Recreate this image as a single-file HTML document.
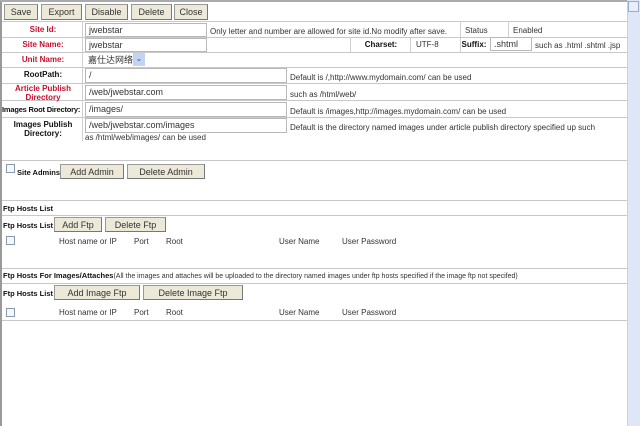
<!DOCTYPE html>
<html><head><meta charset="utf-8"><style>
*{margin:0;padding:0;box-sizing:border-box}
body{width:640px;height:426px;background:#fff;position:relative;overflow:hidden;font-family:"Liberation Sans","Noto Sans CJK SC",sans-serif;font-size:8px;color:#333}
.a{position:absolute;white-space:nowrap}
.btn{position:absolute;background:#ece9d8;border:1px solid #777;border-top-color:#999;border-left-color:#999;font-size:9px;color:#333;text-align:center;line-height:14px}
.hl{position:absolute;left:2px;width:625px;height:1px;background:#c8c8c8}
.vl{position:absolute;width:1px;background:#d0d0d0}
.inp{position:absolute;border:1px solid #b8b8b8;background:#fff;font-size:9px;color:#333;padding-left:3px;line-height:13px}
.r{color:#c8102e;font-weight:bold;text-align:center}
.b{font-weight:bold;color:#111;text-align:center}
.cb{position:absolute;width:9px;height:9px;border:1px solid #8899aa;background:#f4f6f8}
</style></head><body>
<div class="a" style="left:0;top:0;width:2px;height:426px;background:#999"></div>
<div class="a" style="left:0;top:0;width:627px;height:2px;background:#aaa"></div>
<div class="a" style="left:627px;top:0;width:13px;height:426px;background:#dfe6f8;border-left:1px solid #c7d0e8"></div>
<div class="a" style="left:628px;top:1px;width:11px;height:11px;border:1px solid #9aaad0;background:#e8eefc"></div>

<div class="btn" style="left:4px;top:4px;width:34px;height:16px">Save</div>
<div class="btn" style="left:41px;top:4px;width:41px;height:16px">Export</div>
<div class="btn" style="left:85px;top:4px;width:43px;height:16px">Disable</div>
<div class="btn" style="left:131px;top:4px;width:41px;height:16px">Delete</div>
<div class="btn" style="left:174px;top:4px;width:34px;height:16px">Close</div>

<div class="hl" style="top:21px"></div>
<div class="hl" style="top:37px"></div>
<div class="hl" style="top:52px"></div>
<div class="hl" style="top:67px"></div>
<div class="hl" style="top:83px"></div>
<div class="hl" style="top:100px"></div>
<div class="hl" style="top:117px"></div>
<div class="hl" style="top:160px"></div>
<div class="hl" style="top:200px"></div>
<div class="hl" style="top:215px"></div>
<div class="hl" style="top:268px"></div>
<div class="hl" style="top:283px"></div>
<div class="hl" style="top:320px"></div>
<div class="vl" style="left:82px;top:21px;height:120px"></div>
<div class="vl" style="left:460px;top:21px;height:31px"></div>
<div class="vl" style="left:508px;top:21px;height:16px"></div>
<div class="vl" style="left:350px;top:37px;height:15px"></div>
<div class="vl" style="left:410px;top:37px;height:15px"></div>

<div class="a r" style="left:3px;top:25px;width:80px">Site Id:</div>
<div class="inp" style="left:85px;top:23px;width:122px;height:14px">jwebstar</div>
<div class="a" style="left:210px;top:27px">Only letter and number are allowed for site id.No modify after save.</div>
<div class="a" style="left:465px;top:26px">Status</div>
<div class="a" style="left:513px;top:26px">Enabled</div>

<div class="a r" style="left:3px;top:40px;width:80px">Site Name:</div>
<div class="inp" style="left:85px;top:38px;width:122px;height:14px">jwebstar</div>
<div class="a b" style="left:352px;top:40px;width:58px">Charset:</div>
<div class="a" style="left:416px;top:40px">UTF-8</div>
<div class="a b" style="left:460px;top:40px;width:28px">Suffix:</div>
<div class="inp" style="left:490px;top:37px;width:42px;height:14px">.shtml</div>
<div class="a" style="left:535px;top:41px">such as .html .shtml .jsp</div>

<div class="a r" style="left:3px;top:55px;width:80px">Unit Name:</div>
<div class="a" style="left:88px;top:53px;font-size:9px">嘉仕达网络</div>
<div class="a" style="left:133px;top:53px;width:12px;height:13px;background:#c3d3f3;color:#456;font-size:8px;text-align:center;line-height:12px">⌄</div>

<div class="a b" style="left:3px;top:70px;width:80px">RootPath:</div>
<div class="inp" style="left:85px;top:68px;width:202px;height:15px">/</div>
<div class="a" style="left:290px;top:73px">Default is /,http://www.mydomain.com/ can be used</div>

<div class="a r" style="left:3px;top:84px;width:80px;white-space:normal;line-height:9px">Article Publish Directory</div>
<div class="inp" style="left:85px;top:85px;width:202px;height:15px">/web/jwebstar.com</div>
<div class="a" style="left:290px;top:90px">such as /html/web/</div>

<div class="a b" style="left:2px;top:105px;width:82px;text-align:left;font-size:7.5px;letter-spacing:-0.2px">Images Root Directory:</div>
<div class="inp" style="left:85px;top:102px;width:202px;height:15px">/images/</div>
<div class="a" style="left:290px;top:107px">Default is /images,http://images.mydomain.com/ can be used</div>

<div class="a b" style="left:3px;top:120px;width:80px;white-space:normal;line-height:9px">Images Publish Directory:</div>
<div class="inp" style="left:85px;top:118px;width:202px;height:15px">/web/jwebstar.com/images</div>
<div class="a" style="left:290px;top:123px">Default is the directory named images under article publish directory specified up such</div>
<div class="a" style="left:85px;top:133px">as /html/web/images/ can be used</div>

<div class="cb" style="left:6px;top:164px"></div>
<div class="a b" style="left:17px;top:168px;font-size:7.5px">Site Admins</div>
<div class="btn" style="left:60px;top:164px;width:64px;height:15px">Add Admin</div>
<div class="btn" style="left:127px;top:164px;width:78px;height:15px">Delete Admin</div>

<div class="a b" style="left:3px;top:204px;font-size:7.5px">Ftp Hosts List</div>
<div class="a b" style="left:3px;top:221px;font-size:7.5px">Ftp Hosts List</div>
<div class="btn" style="left:54px;top:217px;width:48px;height:15px">Add Ftp</div>
<div class="btn" style="left:105px;top:217px;width:61px;height:15px">Delete Ftp</div>
<div class="cb" style="left:6px;top:236px"></div>
<div class="a" style="left:59px;top:237px">Host name or IP</div>
<div class="a" style="left:134px;top:237px">Port</div>
<div class="a" style="left:166px;top:237px">Root</div>
<div class="a" style="left:279px;top:237px">User Name</div>
<div class="a" style="left:342px;top:237px">User Password</div>

<div class="a" style="left:3px;top:271px;font-size:7px"><b style="color:#111;font-size:7.5px">Ftp Hosts For Images/Attaches</b>(All the images and attaches will be uploaded to the directory named images under ftp hosts specified if the image ftp not specifed)</div>
<div class="a b" style="left:3px;top:289px;font-size:7.5px">Ftp Hosts List</div>
<div class="btn" style="left:54px;top:285px;width:86px;height:15px">Add Image Ftp</div>
<div class="btn" style="left:143px;top:285px;width:100px;height:15px">Delete Image Ftp</div>
<div class="cb" style="left:6px;top:308px"></div>
<div class="a" style="left:59px;top:308px">Host name or IP</div>
<div class="a" style="left:134px;top:308px">Port</div>
<div class="a" style="left:166px;top:308px">Root</div>
<div class="a" style="left:279px;top:308px">User Name</div>
<div class="a" style="left:342px;top:308px">User Password</div>
</body></html>
